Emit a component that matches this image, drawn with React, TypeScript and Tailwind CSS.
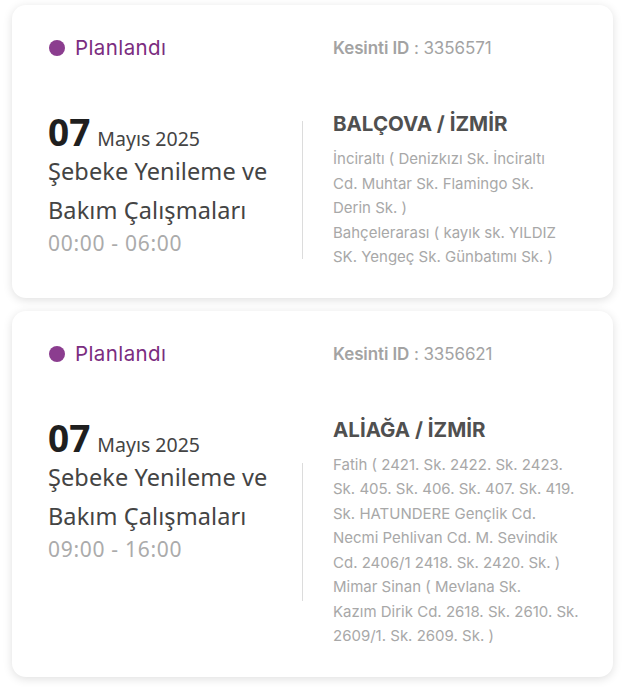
import React from "react";

type Outage = {
  id: string;
  day: string;
  month: string;
  title: string[];
  time: string;
  place: string;
  areas: string[][];
};

const data: Outage[] = [
  {
    id: "3356571",
    day: "07",
    month: "Mayıs 2025",
    title: ["Şebeke Yenileme ve", "Bakım Çalışmaları"],
    time: "00:00 - 06:00",
    place: "BALÇOVA / İZMİR",
    areas: [
      ["İnciraltı ( Denizkızı Sk. İnciraltı", "Cd. Muhtar Sk. Flamingo Sk.", "Derin Sk. )"],
      ["Bahçelerarası ( kayık sk. YILDIZ", "SK. Yengeç Sk. Günbatımı Sk. )"],
    ],
  },
  {
    id: "3356621",
    day: "07",
    month: "Mayıs 2025",
    title: ["Şebeke Yenileme ve", "Bakım Çalışmaları"],
    time: "09:00 - 16:00",
    place: "ALİAĞA / İZMİR",
    areas: [
      [
        "Fatih ( 2421. Sk. 2422. Sk. 2423.",
        "Sk. 405. Sk. 406. Sk. 407. Sk. 419.",
        "Sk. HATUNDERE Gençlik Cd.",
        "Necmi Pehlivan Cd. M. Sevindik",
        "Cd. 2406/1 2418. Sk. 2420. Sk. )",
      ],
      ["Mimar Sinan ( Mevlana Sk.", "Kazım Dirik Cd. 2618. Sk. 2610. Sk.", "2609/1. Sk. 2609. Sk. )"],
    ],
  },
];

const geo = "font-['Inter',_'Lato',_sans-serif]";
const ubu = "font-['Noto_Sans',_'Open_Sans',_sans-serif]";

function Card({ o }: { o: Outage }) {
  return (
    <div className="bg-white rounded-[14px] shadow-[0_2px_10px_rgba(0,0,0,0.13)] pt-[29px] pb-[28px] pl-[36px] pr-[36px]">
      <div className="flex items-center h-[28px]">
        <div className="w-[254px] flex items-center">
          <span className="w-[16px] h-[16px] rounded-full bg-[#8b3d8f] ml-[1px] mr-[10px]" />
          <span className={`${geo} text-[20.5px] tracking-[0.4px] text-[#7b2d80] leading-[28px]`}>Planlandı</span>
        </div>
        <div className={`${geo} pl-[31px] text-[17px] text-[#a3a3a3] leading-[28px] tracking-[-0.1px]`}>
          <span className="font-semibold">Kesinti ID</span> : {o.id}
        </div>
      </div>
      <div className="flex mt-[48px]">
        <div className={`${ubu} w-[254px] shrink-0`}>
          <div className="flex items-baseline h-[40px] mt-[2px]">
            <span className="text-[37px] font-bold text-[#1f1f1f] leading-[40px]">{o.day}</span>
            <span className="text-[19.5px] text-[#444] ml-[7px] leading-[40px]">{o.month}</span>
          </div>
          {o.title.map((t) => (
            <div key={t} className="text-[23.5px] text-[#444] leading-[39px] tracking-[0.1px]">
              {t}
            </div>
          ))}
          <div className="text-[21px] text-[#ababab] leading-[26px] tracking-[0.7px]">{o.time}</div>
        </div>
        <div className="w-px h-[138px] bg-[#dcdcdc] self-center shrink-0" />
        <div className={`${geo} flex-1 pl-[30px]`}>
          <div className="text-[20.5px] font-bold text-[#505050] leading-[28px]">{o.place}</div>
          <div className="mt-[9px] text-[15px] text-[#a8a8a8] leading-[24.5px]">
            {o.areas.map((a) => (
              <div key={a[0]}>
                {a.map((line) => (
                  <div key={line} className="whitespace-nowrap">
                    {line}
                  </div>
                ))}
              </div>
            ))}
          </div>
        </div>
      </div>
    </div>
  );
}

export default function App() {
  return (
    <div className="bg-white w-[626px] min-h-[687px] pt-[5px] pl-[12px] pr-[13px] flex flex-col gap-[13px]">
      {data.map((o) => (
        <Card key={o.id} o={o} />
      ))}
    </div>
  );
}
